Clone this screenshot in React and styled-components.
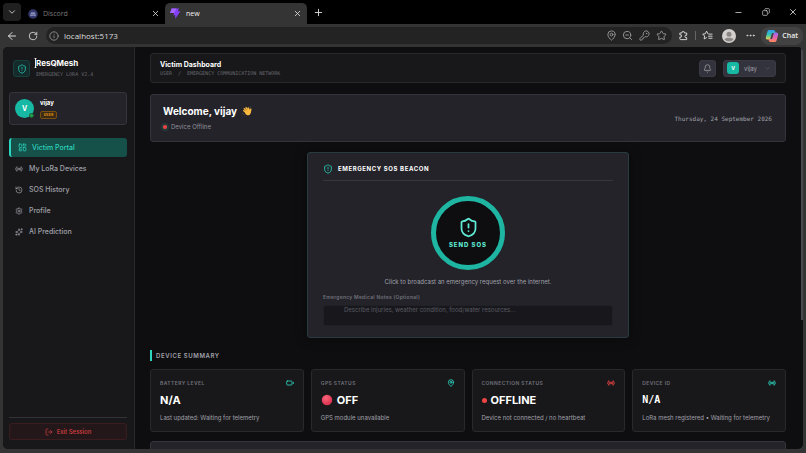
import React from "react";
import styled, { createGlobalStyle } from "styled-components";
import {
  ArrowLeft, RotateCw, Info, MapPin, ZoomOut, KeyRound, Star, Ellipsis,
  ChevronDown, X, Plus, Minus, Copy, ShieldAlert, LayoutDashboard, Radio,
  History, Settings, Sparkles, LogOut, Bell, Battery,
} from "lucide-react";

const navItems = [
  { label: "Victim Portal", icon: LayoutDashboard, active: true },
  { label: "My LoRa Devices", icon: Radio },
  { label: "SOS History", icon: History },
  { label: "Profile", icon: Settings },
  { label: "AI Prediction", icon: Sparkles },
];

const devices = [
  { label: "BATTERY LEVEL", icon: Battery, value: "N/A", note: "Last updated: Waiting for telemetry" },
  { label: "GPS STATUS", icon: MapPin, value: "OFF", note: "GPS module unavailable", mark: "ball" },
  { label: "CONNECTION STATUS", icon: Radio, value: "OFFLINE", note: "Device not connected / no heartbeat", mark: "dot", danger: true },
  { label: "DEVICE ID", icon: Radio, value: "N/A", note: "LoRa mesh registered • Waiting for telemetry", mono: true },
];

function DiscordIcon() {
  return (
    <svg width="10" height="10" viewBox="0 0 20 20" aria-hidden="true">
      <circle cx="10" cy="10" r="9.5" fill="#34386c" />
      <path d="M4.500 13.500C4.700 10.500 5.500 8.200 6.300 6.800L8.600 6L9 6.800H11L11.400 6L13.700 6.800C14.500 8.200 15.300 10.500 15.500 13.500L13 14.700L12.300 13.600H7.700L7 14.700z" fill="#8d92bd" />
      <circle cx="8" cy="10.500" r="1.100" fill="#34386c" />
      <circle cx="12" cy="10.500" r="1.100" fill="#34386c" />
    </svg>
  );
}

function BoltIcon() {
  return (
    <svg width="11" height="11" viewBox="0 0 20 20" aria-hidden="true">
      <path d="M3 1h13.500l-2.300 5H19L9.500 19.500V13H6l1.500-4H0z" fill="#8540f5" />
      <path d="M3 1h9L7.500 9H0z" fill="#a463ff" />
    </svg>
  );
}

function PuzzleIcon() {
  return (
    <svg width="11" height="11" viewBox="0 0 24 24" fill="none" stroke="currentColor" strokeWidth="2" strokeLinejoin="round" aria-hidden="true">
      <path d="M4 6.500h4.500a2.800 2.800 0 1 1 5.500 0H19v5a2.700 2.700 0 1 0 0 5V21H6a2 2 0 0 1-2-2v-3.500a2.700 2.700 0 1 0 0-5z" />
    </svg>
  );
}

function FavoritesIcon() {
  return (
    <svg width="11" height="11" viewBox="0 0 24 24" fill="none" stroke="currentColor" strokeWidth="2" strokeLinecap="round" strokeLinejoin="round" aria-hidden="true">
      <path d="M13 8L10 2.500L7.200 8.200L1.500 9l4.200 4.200l-1 6.300l5.300-2.800M15 9h7M14 13.500h8M15 18h7" />
    </svg>
  );
}

function CopilotIcon() {
  return (
    <svg width="14" height="14" viewBox="0 0 28 28" aria-hidden="true">
      <defs>
        <linearGradient id="copLeft" x1="0" y1="0" x2="0" y2="1">
          <stop offset="0" stopColor="#2f9bf0" />
          <stop offset=".5" stopColor="#35c5b0" />
          <stop offset="1" stopColor="#f3d04a" />
        </linearGradient>
        <linearGradient id="copRight" x1="0" y1="0" x2="0" y2="1">
          <stop offset="0" stopColor="#8f6bf2" />
          <stop offset=".5" stopColor="#e660b4" />
          <stop offset="1" stopColor="#fb8a55" />
        </linearGradient>
      </defs>
      <path d="M9 2h8c2 0 3 1.500 3.500 3.500L21 8h-5c-2 0-2.500 1-3 3l-2 7c-.6 2-1.500 3-3.500 3H5c-3 0-4-2-3.200-5L4.500 6C5.300 3.300 6.500 2 9 2z" fill="url(#copLeft)" />
      <path d="M19 26h-8c-2 0-3-1.500-3.500-3.500L7 20h5c2 0 2.500-1 3-3l2-7c.6-2 1.500-3 3.500-3H23c3 0 4 2 3.200 5l-2.700 10c-.8 2.700-2 4-4.500 4z" fill="url(#copRight)" />
    </svg>
  );
}

function WaveHand() {
  return (
    <svg width="10" height="10" viewBox="0 0 20 20" role="img" aria-label="waving hand">
      <g stroke="#fbb93e" strokeWidth="2.900" strokeLinecap="round">
        <path d="M3.500 9.500L9 14M4.500 5.500L11 12M8 3.500L13 10M12.500 4L15 9" />
        <path d="M17.500 6.500L16.500 12" />
      </g>
      <path d="M6 10.500L13 7l4.600 2.500c.6 4-.6 7.600-3.600 8.800c-3 1.200-6-.8-8-4.300z" fill="#fbb93e" />
      <path d="M7 8l4 4M10 6.500l3.500 4" stroke="#e09428" strokeWidth=".6" />
      <path d="M1.500 14.500c.3 1.700 1.200 2.800 2.700 3.500M15.500 1.500c1.500.4 2.400 1.200 3 2.600" stroke="#7d6a48" strokeWidth="1" fill="none" strokeLinecap="round" />
    </svg>
  );
}

function RedBall() {
  return (
    <svg width="12" height="12" viewBox="0 0 24 24" aria-hidden="true">
      <defs>
        <radialGradient id="ball" cx=".4" cy=".3" r=".7">
          <stop offset="0" stopColor="#f9667c" />
          <stop offset="1" stopColor="#d92f4e" />
        </radialGradient>
      </defs>
      <circle cx="12" cy="12" r="10.500" fill="url(#ball)" />
    </svg>
  );
}

function IBeam() {
  return (
    <svg width="3" height="10" viewBox="0 0 3 10" aria-hidden="true">
      <path d="M1.500 0v10" stroke="#e8e8e8" strokeWidth="1" />
      <path d="M0 .5h3M0 9.500h3" stroke="#e8e8e8" strokeWidth="1" opacity=".4" />
    </svg>
  );
}

function DeviceCard({ label, icon: Icon, value, note, mark, danger, mono }) {
  return (
    <Card>
      <CardTop $danger={danger}>
        <CardLabel>{label}</CardLabel>
        <Icon size={8} strokeWidth={2.5} />
      </CardTop>
      <CardValue $mono={mono}>
        {mark === "ball" && <RedBall />}
        {mark === "dot" && <StatusDot $size={5} />}
        {value}
      </CardValue>
      <CardNote>{note}</CardNote>
    </Card>
  );
}

export default function App() {
  return (
    <Browser>
      <GlobalStyle />
      <TabStrip>
        <TabSearch aria-label="Search tabs"><ChevronDown size={10} /></TabSearch>
        <Tab>
          <DiscordIcon />
          <TabTitle>Discord</TabTitle>
          <TabClose aria-label="Close Discord"><X size={9} /></TabClose>
        </Tab>
        <Tab $active>
          <BoltIcon />
          <TabTitle>new</TabTitle>
          <TabClose aria-label="Close new"><X size={9} /></TabClose>
        </Tab>
        <IconButton $width={22} aria-label="New tab"><Plus size={11} /></IconButton>
        <WindowControls>
          <IconButton $width={27} aria-label="Minimize"><Minus size={9} /></IconButton>
          <IconButton $width={27} aria-label="Restore"><RestoreIcon size={8} /></IconButton>
          <IconButton $width={27} aria-label="Close window"><X size={10} /></IconButton>
        </WindowControls>
      </TabStrip>

      <Toolbar>
        <IconButton $width={22} aria-label="Back"><ArrowLeft size={12} /></IconButton>
        <IconButton $width={20} aria-label="Reload"><RotateCw size={10} /></IconButton>
        <AddressBar>
          <Info size={10} />
          <Address>
            <AddressInput aria-label="Address" defaultValue="localhost:5173" />
          </Address>
          <IconButton $dim $width={16} aria-label="Location"><MapPin size={11} /></IconButton>
          <IconButton $dim $width={17} aria-label="Zoom"><ZoomOut size={11} /></IconButton>
          <IconButton $dim $width={17} aria-label="Passwords"><KeyRound size={11} /></IconButton>
          <IconButton $dim $width={17} aria-label="Favorite"><Star size={11} /></IconButton>
        </AddressBar>
        <IconButton $width={23} aria-label="Extensions"><PuzzleIcon /></IconButton>
        <Separator />
        <IconButton $width={23} aria-label="Favorites"><FavoritesIcon /></IconButton>
        <ProfileButton aria-label="Browser profile">
          <svg width="14" height="14" viewBox="0 0 28 28">
            <circle cx="14" cy="14" r="14" fill="#d3d0cd" />
            <circle cx="14" cy="10.500" r="5" fill="#8b8784" />
            <path d="M5 21c1-5 17-5 18 0c-4 5-14 5-18 0z" fill="#8b8784" />
          </svg>
        </ProfileButton>
        <IconButton $width={22} aria-label="More"><Ellipsis size={11} /></IconButton>
        <ChatButton><CopilotIcon />Chat</ChatButton>
      </Toolbar>

      <Page>
        <Sidebar>
          <Brand>
            <BrandIcon><ShieldAlert size={10} /></BrandIcon>
            <div>
              <BrandName>ResQMesh<Pointer><IBeam /></Pointer></BrandName>
              <BrandSub>EMERGENCY LORA V2.4</BrandSub>
            </div>
          </Brand>
          <UserCard>
            <Avatar>V<Online /></Avatar>
            <div>
              <UserName>vijay</UserName>
              <Role>USER</Role>
            </div>
          </UserCard>
          <Nav>
            {navItems.map(({ label, icon: Icon, active }) => (
              <NavLink href="#" key={label} $active={active}>
                <Icon size={active ? 9 : 8} />
                {label}
              </NavLink>
            ))}
          </Nav>
          <SidebarFoot>
            <ExitButton><LogOut size={8} />Exit Session</ExitButton>
          </SidebarFoot>
        </Sidebar>

        <Main>
          <Header>
            <div>
              <HeaderTitle>Victim Dashboard</HeaderTitle>
              <Crumbs><span>USER</span><span>/</span><span>EMERGENCY COMMUNICATION NETWORK</span></Crumbs>
            </div>
            <HeaderActions>
              <BellButton aria-label="Notifications"><Bell size={9} /></BellButton>
              <UserMenu>
                <Initial>V</Initial>
                vijay
                <ChevronDown size={7} />
              </UserMenu>
            </HeaderActions>
          </Header>

          <Welcome>
            <div>
              <WelcomeTitle>Welcome, vijay <WaveHand /></WelcomeTitle>
              <DeviceState><StatusDot $size={4} $glow />Device Offline</DeviceState>
            </div>
            <DateText>Thursday, 24 September 2026</DateText>
          </Welcome>

          <SosCard>
            <SosTitle><ShieldAlert size={10} />EMERGENCY SOS BEACON</SosTitle>
            <SosButton><ShieldAlert size={21} />SEND SOS</SosButton>
            <SosHint>Click to broadcast an emergency request over the internet.</SosHint>
            <NotesLabel htmlFor="notes">Emergency Medical Notes (Optional)</NotesLabel>
            <Notes id="notes" placeholder="Describe injuries, weather condition, food/water resources..." />
          </SosCard>

          <SectionTitle>DEVICE SUMMARY</SectionTitle>
          <Cards>
            {devices.map((d) => <DeviceCard key={d.label} {...d} />)}
          </Cards>
          <NextPanel />
        </Main>
        <Scrollbar />
      </Page>
    </Browser>
  );
}

const mono = `"DejaVu Sans Mono", "Liberation Mono", monospace`;

const GlobalStyle = createGlobalStyle`
  * {
    box-sizing: border-box;
  }
  body {
    margin: 0;
    background: #000;
    color: #fff;
    font-family: Inter, "Liberation Sans", sans-serif;
    font-size: 7px;
  }
  h1, h2, p {
    margin: 0;
  }
  button, input, textarea {
    font-family: inherit;
    font-size: inherit;
    color: inherit;
    border: none;
    background: none;
    padding: 0;
    margin: 0;
  }
  svg {
    flex-shrink: 0;
  }
`;

const Browser = styled.div`
  display: flex;
  flex-direction: column;
  height: 100vh;
  overflow: hidden;
  background: #343434;
`;

const TabStrip = styled.div`
  display: flex;
  align-items: center;
  height: 24px;
  flex-shrink: 0;
  padding-left: 3px;
  background: #000;
`;

const TabSearch = styled.button`
  display: flex;
  align-items: center;
  justify-content: center;
  width: 18px;
  height: 18px;
  margin-right: 2px;
  border-radius: 4px;
  background: #202020;
  color: #ddd;
`;

const Tab = styled.div`
  display: flex;
  align-items: center;
  gap: 5px;
  width: 142px;
  height: 21px;
  align-self: flex-end;
  padding: 0 5px;
  border-radius: 5px 5px 0 0;
  background: ${(p) => (p.$active ? "#343434" : "transparent")};
  color: ${(p) => (p.$active ? "#f2f2f2" : "#777")};
`;

const TabTitle = styled.span`
  flex: 1;
  font-family: "Open Sans", sans-serif;
  font-size: 7px;
`;

const TabClose = styled.button`
  display: flex;
  color: #eee;
`;

const IconButton = styled.button`
  display: flex;
  align-items: center;
  justify-content: center;
  width: ${(p) => p.$width}px;
  height: 18px;
  color: ${(p) => (p.$dim ? "#9a9a9a" : "#dedede")};
`;

const RestoreIcon = styled(Copy)`
  transform: scaleX(-1);
`;

const WindowControls = styled.div`
  display: flex;
  margin-left: auto;
`;

const Toolbar = styled.div`
  display: flex;
  align-items: center;
  height: 23px;
  flex-shrink: 0;
  padding: 0 3px 0 1px;
  background: #343434;
`;

const AddressBar = styled.div`
  display: flex;
  align-items: center;
  flex: 1;
  height: 17px;
  margin-left: 3px;
  padding: 0 2px 0 3px;
  border-radius: 9px;
  background: #232323;
  color: #999;
`;

const Address = styled.label`
  flex: 1;
  margin-left: 5px;
`;

const AddressInput = styled.input`
  width: 100%;
  font-family: "Open Sans", sans-serif;
  font-size: 8px;
  color: #ddd;
  outline: none;
`;

const Separator = styled.div`
  width: 1px;
  height: 9px;
  background: #666;
`;

const ProfileButton = styled(IconButton)`
  width: 20px;
`;

const ChatButton = styled.button`
  display: flex;
  align-items: center;
  gap: 3px;
  height: 18px;
  padding: 0 5px 0 4px;
  border-radius: 8px;
  background: #424242;
  color: #eee;
  font-family: "Open Sans", sans-serif;
  font-weight: 600;
`;

const Page = styled.div`
  display: flex;
  flex: 1;
  min-height: 0;
  margin: 0 3px 4px;
  border-radius: 5px;
  overflow: hidden;
  background: #0e0e10;
`;

const Sidebar = styled.aside`
  display: flex;
  flex-direction: column;
  width: 132px;
  flex-shrink: 0;
  padding: 11px 7px 9px 6px;
  border-right: 1px solid #29292d;
  background: #18181a;
`;

const Brand = styled.div`
  display: flex;
  gap: 6px;
  padding: 0 4px 14px;
`;

const BrandIcon = styled.div`
  display: flex;
  align-items: center;
  justify-content: center;
  width: 17px;
  height: 17px;
  margin-top: 2px;
  border: 1px solid #17413f;
  border-radius: 3px;
  background: #142a2b;
  color: #2cc7b2;
`;

const BrandName = styled.div`
  position: relative;
  font-size: 8px;
  line-height: 10px;
  font-weight: 700;
`;

const Pointer = styled.span`
  position: absolute;
  left: -2px;
  top: 0;
  display: flex;
`;

const BrandSub = styled.div`
  margin-top: 3px;
  font-family: ${mono};
  font-size: 5px;
  line-height: 6px;
  color: #66666e;
`;

const UserCard = styled.div`
  display: flex;
  align-items: center;
  gap: 6px;
  height: 33px;
  padding: 0 5px;
  margin-top: 1px;
  border: 1px solid #34343c;
  border-radius: 3px;
  background: #232329;
`;

const Avatar = styled.div`
  position: relative;
  display: flex;
  align-items: center;
  justify-content: center;
  width: 19px;
  height: 19px;
  border-radius: 50%;
  background: #17b8a4;
  font-weight: 700;
`;

const Online = styled.span`
  position: absolute;
  right: 0;
  bottom: 0;
  width: 5px;
  height: 5px;
  border: 1px solid #1d5a35;
  border-radius: 50%;
  background: #22a34c;
`;

const UserName = styled.div`
  font-size: 6px;
  line-height: 8px;
  font-weight: 700;
`;

const Role = styled.div`
  width: 17px;
  margin-top: 4px;
  border: 1px solid #7a4f12;
  border-radius: 2px;
  background: #3a2a16;
  color: #d98a13;
  font-family: ${mono};
  font-size: 4px;
  line-height: 6px;
  font-weight: 700;
  text-align: center;
`;

const Nav = styled.nav`
  display: flex;
  flex-direction: column;
  gap: 2px;
  margin-top: 13px;
`;

const NavLink = styled.a`
  display: flex;
  align-items: center;
  gap: ${(p) => (p.$active ? 5 : 6)}px;
  height: 19px;
  padding-left: ${(p) => (p.$active ? 7 : 6)}px;
  border-left: ${(p) => (p.$active ? "2px solid #2dd4bf" : "none")};
  border-radius: 3px;
  background: ${(p) => (p.$active ? "#155049" : "transparent")};
  color: ${(p) => (p.$active ? "#2dd4bf" : "#a1a1aa")};
  font-weight: 500;
  text-decoration: none;
`;

const SidebarFoot = styled.div`
  margin-top: auto;
  padding-top: 5px;
  border-top: 1px solid #333338;
`;

const ExitButton = styled.button`
  display: flex;
  align-items: center;
  justify-content: center;
  gap: 4px;
  width: 100%;
  height: 17px;
  border: 1px solid #3b1d20;
  border-radius: 3px;
  background: #241719;
  color: #d64040;
  font-size: 6px;
  font-weight: 500;
`;

const Main = styled.main`
  flex: 1;
  min-width: 0;
  padding: 6px 15px 0;
  overflow: hidden;
`;

const Header = styled.header`
  display: flex;
  align-items: center;
  justify-content: space-between;
  height: 30px;
  padding: 0 9px;
  border: 1px solid #29292d;
  border-radius: 3px;
  background: #18181a;
`;

const HeaderTitle = styled.h1`
  font-size: 7px;
  line-height: 10px;
  font-weight: 700;
`;

const Crumbs = styled.div`
  display: flex;
  gap: 6px;
  font-family: ${mono};
  font-size: 5px;
  line-height: 6px;
  color: #66666e;
`;

const HeaderActions = styled.div`
  display: flex;
  gap: 7px;
`;

const BellButton = styled.button`
  display: flex;
  align-items: center;
  justify-content: center;
  width: 17px;
  height: 17px;
  border: 1px solid #3a3a44;
  border-radius: 3px;
  background: #33333d;
  color: #a1a1aa;
`;

const UserMenu = styled.button`
  display: flex;
  align-items: center;
  gap: 5px;
  height: 17px;
  padding: 0 4px 0 3px;
  border: 1px solid #3a3a44;
  border-radius: 3px;
  background: #33333d;
  color: #a1a1aa;
  font-size: 6px;

  svg {
    margin-left: 2px;
    color: #666670;
  }
`;

const Initial = styled.span`
  width: 12px;
  border-radius: 3px;
  background: #17b8a4;
  color: #fff;
  font-size: 5px;
  line-height: 12px;
  font-weight: 700;
  text-align: center;
`;

const Welcome = styled.section`
  display: flex;
  align-items: center;
  justify-content: space-between;
  height: 48px;
  margin-top: 11px;
  padding: 0 13px 0 12px;
  border: 1px solid #34343c;
  border-radius: 3px;
  background: #232329;
`;

const WelcomeTitle = styled.h2`
  display: flex;
  align-items: center;
  gap: 5px;
  font-size: 10px;
  line-height: 14px;
  font-weight: 700;
`;

const DeviceState = styled.div`
  display: flex;
  align-items: center;
  gap: 4px;
  margin-top: 3px;
  font-size: 6px;
  line-height: 12px;
  color: #92929c;
`;

const StatusDot = styled.span`
  width: ${(p) => p.$size}px;
  height: ${(p) => p.$size}px;
  border-radius: 50%;
  background: #ef4444;
  box-shadow: ${(p) => (p.$glow ? "0 0 0 2px #25393b" : "none")};
`;

const DateText = styled.span`
  font-family: ${mono};
  font-size: 6px;
  color: #a1a1aa;
`;

const SosCard = styled.section`
  display: flex;
  flex-direction: column;
  max-width: 322px;
  margin: 10px auto 0;
  padding: 11px 15px;
  border: 1px solid #283c40;
  border-radius: 3px;
  background: #232329;
  box-shadow: 0 0 12px rgba(0, 0, 0, 0.4);
`;

const SosTitle = styled.h2`
  display: flex;
  align-items: center;
  gap: 5px;
  padding-bottom: 6px;
  border-bottom: 1px solid #37373f;
  font-size: 6px;
  line-height: 10px;
  font-weight: 700;
  letter-spacing: 0.1em;

  svg {
    color: #2dd4bf;
  }
`;

const SosButton = styled.button`
  display: flex;
  flex-direction: column;
  align-items: center;
  justify-content: center;
  gap: 3px;
  align-self: center;
  width: 74px;
  height: 74px;
  margin-top: 15px;
  border: 5px solid #1fb5a3;
  border-radius: 50%;
  background: #0e0e10;
  color: #5eead4;
  font-size: 6px;
  line-height: 8px;
  font-weight: 800;
  letter-spacing: 0.16em;
`;

const SosHint = styled.p`
  margin-top: 6px;
  font-size: 6px;
  line-height: 12px;
  text-align: center;
  color: #a1a1aa;
`;

const NotesLabel = styled.label`
  margin-top: 6px;
  font-size: 5px;
  line-height: 6px;
  font-weight: 600;
  letter-spacing: 0.05em;
  color: #71717a;
`;

const Notes = styled.textarea`
  height: 21px;
  margin-top: 5px;
  padding: 0 20px;
  border: 1px solid #202027;
  border-radius: 3px;
  background: #18181c;
  font-size: 6px;
  line-height: 8px;
  resize: none;
  outline: none;
  overflow: hidden;

  &::placeholder {
    color: #5a5a63;
  }
`;

const SectionTitle = styled.h2`
  margin-top: 12px;
  padding-left: 4px;
  border-left: 2px solid #2dd4bf;
  font-size: 6px;
  line-height: 11px;
  font-weight: 600;
  letter-spacing: 0.1em;
  color: #a1a1aa;
`;

const Cards = styled.div`
  display: grid;
  grid-template-columns: repeat(4, 1fr);
  gap: 7px;
  margin-top: 8px;
`;

const Card = styled.article`
  min-width: 0;
  padding: 9px;
  border: 1px solid #29292d;
  border-radius: 3px;
  background: #18181a;
`;

const CardTop = styled.div`
  display: flex;
  align-items: center;
  justify-content: space-between;
  color: ${(p) => (p.$danger ? "#ef4444" : "#2dd4bf")};
`;

const CardLabel = styled.span`
  font-size: 5px;
  line-height: 8px;
  font-weight: 600;
  letter-spacing: 0.08em;
  color: #71717a;
`;

const CardValue = styled.div`
  display: flex;
  align-items: center;
  gap: 4px;
  margin-top: 6px;
  font-family: ${(p) => (p.$mono ? mono : "inherit")};
  font-size: ${(p) => (p.$mono ? 10 : 11)}px;
  line-height: 14px;
  font-weight: 700;
`;

const CardNote = styled.p`
  margin-top: 7px;
  font-size: 6px;
  line-height: 8px;
  color: #a1a1aa;
  white-space: nowrap;
`;

const NextPanel = styled.section`
  height: 40px;
  margin-top: 9px;
  border: 1px solid #34343c;
  border-radius: 3px;
  background: #232329;
`;

const Scrollbar = styled.div`
  width: 2px;
  height: 68%;
  background: #4a4a4e;
`;
